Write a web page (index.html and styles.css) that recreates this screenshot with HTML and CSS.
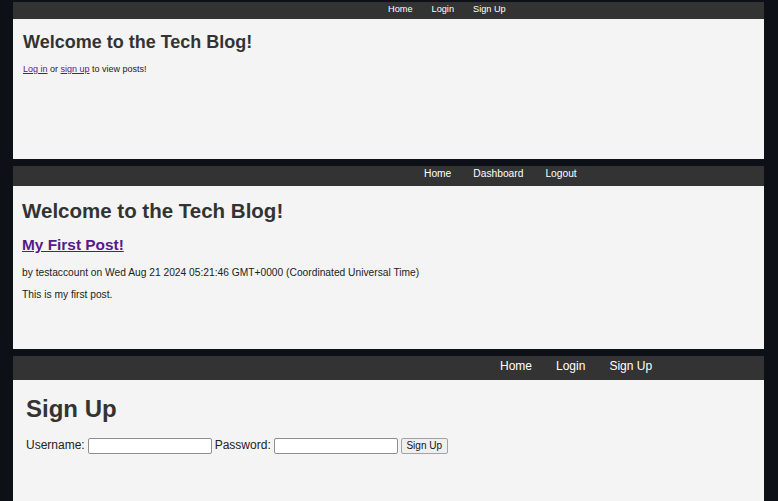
FILE: index.html
```html
<!DOCTYPE html>
<html lang="en">
<head>
<meta charset="utf-8">
<title>Tech Blog</title>
<link rel="stylesheet" href="styles.css">
</head>
<body>
<div class="stack">
  <section class="panel p1">
    <nav class="nav">
      <a href="#">Home</a>
      <a href="#">Login</a>
      <a href="#">Sign Up</a>
    </nav>
    <main class="content">
      <h1 class="title">Welcome to the Tech Blog!</h1>
      <p class="text"><a class="link" href="#">Log in</a> or <a class="link" href="#">sign up</a> to view posts!</p>
    </main>
  </section>

  <section class="panel p2">
    <nav class="nav">
      <a href="#">Home</a>
      <a href="#">Dashboard</a>
      <a href="#">Logout</a>
    </nav>
    <main class="content">
      <h1 class="title">Welcome to the Tech Blog!</h1>
      <h2 class="post-title"><a class="link" href="#">My First Post!</a></h2>
      <p class="meta">by testaccount on Wed Aug 21 2024 05:21:46 GMT+0000 (Coordinated Universal Time)</p>
      <p class="text">This is my first post.</p>
    </main>
  </section>

  <section class="panel p3">
    <nav class="nav">
      <a href="#">Home</a>
      <a href="#">Login</a>
      <a href="#">Sign Up</a>
    </nav>
    <main class="content">
      <h1 class="title">Sign Up</h1>
      <form class="form">
        <label class="label" for="u">Username:</label>
        <input class="field" id="u" type="text">
        <label class="label" for="p">Password:</label>
        <input class="field" id="p" type="password">
        <button class="btn" type="button">Sign Up</button>
      </form>
    </main>
  </section>
</div>
</body>
</html>
```

FILE: styles.css
```css
html, body {
  margin: 0;
  height: 100%;
  overflow: hidden;
  background: #0d1117;
}

.stack {
  display: flex;
  flex-direction: column;
  gap: 7px;
  padding: 2px 14px 0 13px;
}

.panel {
  background: #f4f4f4;
  color: #333;
  font-family: "Liberation Sans", Arial, sans-serif;
  display: flex;
  flex-direction: column;
  flex-shrink: 0;
}

.nav {
  background: #333;
  display: flex;
  box-sizing: border-box;
}

.nav a {
  color: #fff;
  text-decoration: none;
}

.content h1, .content h2, .content p {
  margin: 0;
}

.title {
  font-weight: bold;
}

.link {
  color: #551a8b;
  text-decoration: underline;
}

/* Panel 1 */
.p1 { height: 157px; }
.p1 .nav {
  height: 17px;
  padding: 2px 0 0 375px;
  gap: 19px;
  font-size: 9.2px;
  line-height: 10px;
}
.p1 .content { padding: 13px 10px; }
.p1 .title { font-size: 18px; line-height: 20px; }
.p1 .text { margin-top: 11.5px; font-size: 9px; line-height: 10px; color: #222; }

/* Panel 2 */
.p2 { height: 183px; }
.p2 .nav {
  height: 20px;
  padding: 1.5px 0 0 411px;
  gap: 22px;
  font-size: 10.24px;
  line-height: 12px;
}
.p2 .content { padding: 13.4px 9px; }
.p2 .title { font-size: 20.5px; line-height: 23px; }
.p2 .post-title { margin-top: 13.3px; font-size: 15.4px; line-height: 18px; font-weight: bold; }
.p2 .meta { margin-top: 13.3px; font-size: 10.24px; line-height: 12px; color: #222; }
.p2 .text { margin-top: 10px; font-size: 10.24px; line-height: 12px; color: #222; }

/* Panel 3 */
.p3 { height: 160px; }
.p3 .nav {
  height: 24px;
  padding: 3px 0 0 487px;
  gap: 24px;
  font-size: 12px;
  line-height: 14px;
}
.p3 .content { padding: 15.4px 13px; }
.p3 .title { font-size: 24px; line-height: 28px; }

.form {
  margin-top: 14.6px;
  display: flex;
  align-items: flex-start;
  gap: 3px;
  font-size: 12px;
}

.label {
  line-height: 15px;
  color: #222;
}

.field {
  box-sizing: border-box;
  width: 124px;
  height: 16px;
  margin: 0;
  padding: 0 2px;
  border: 1px solid #8f8f8f;
  border-radius: 2px;
  background: #fff;
}

.btn {
  box-sizing: border-box;
  height: 16px;
  width: 47px;
  margin: 0;
  padding: 0;
  border: 1px solid #a3a3a3;
  border-radius: 2px;
  background: #efefef;
  color: #111;
  font-family: "Liberation Sans", Arial, sans-serif;
  font-size: 10px;
  line-height: 14px;
}
```
